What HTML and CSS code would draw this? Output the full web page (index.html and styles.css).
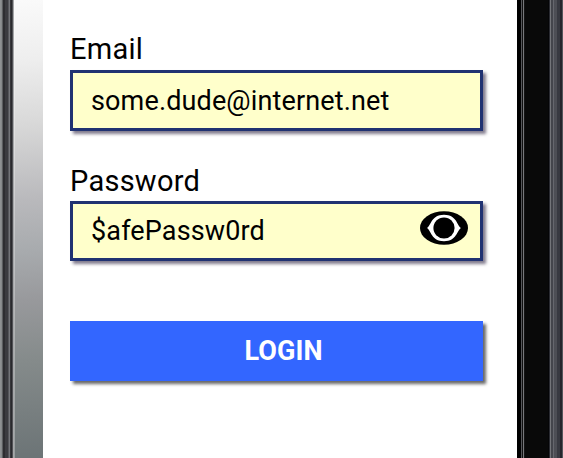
FILE: index.html
```html
<!DOCTYPE html>
<html lang="en">
<head>
<meta charset="utf-8">
<title>Login</title>
<link rel="stylesheet" href="styles.css">
</head>
<body>
<div class="phone">
  <div class="bezel-left"></div>
  <div class="glare"></div>
  <main class="screen">
    <form class="login">
      <div class="field email">
        <label class="label">Email</label>
        <div class="input"><span class="value">some.dude@internet.net</span></div>
      </div>
      <div class="field password">
        <label class="label">Password</label>
        <div class="input">
          <span class="value">$afePassw0rd</span>
          <svg class="eye" viewBox="0 0 48 34" width="48" height="34">
            <ellipse cx="24" cy="17" rx="24" ry="16.7" fill="#000"/>
            <path d="M7 17C11 15 11 3.8 24 3.8S37 15 41 17C37 19 37 30.2 24 30.2S11 19 7 17Z" fill="#fff"/>
            <circle cx="24" cy="17" r="10.6" fill="#000"/>
          </svg>
        </div>
      </div>
      <button class="submit" type="button">LOGIN</button>
    </form>
  </main>
  <div class="bezel-right"></div>
</div>
</body>
</html>
```
FILE: styles.css
```css
* { box-sizing: border-box; }
body { margin: 0; background: #fff; overflow: hidden; font-family: Roboto, sans-serif; color: #000; }
.phone { display: flex; width: 563px; height: 458px; }
.bezel-left {
  width: 14px;
  background: linear-gradient(90deg, #8e9193 0 1px, #85888a 1px 2px, #5b5d60 2px 3px, #2d2d31 3px 5px, #3b3b40 5px 8px, #55565b 8px 9px, #737479 9px 10px, #36363a 10px 11px, #29292d 11px 12px, #505155 12px 13px, #a5a6a8 13px 14px);
}
.glare { width: 29px; background: linear-gradient(176deg, #fafafa 0, #eeeeee 60px, #d8d8d8 125px, #b9b9bc 200px, #a8abae 250px, #98999c 300px, #858b8b 360px, #6c7476 458px); border-left: 1px solid rgba(255, 255, 255, .3); }
.screen { width: 474px; padding: 34.5px 34px 0 27px; background: #fff; }
.login { display: flex; flex-direction: column; }
.field { display: flex; flex-direction: column; }
.email { height: 96.5px; }
.password { margin-top: 36px; }
.label { height: 35.5px; font-size: 29px; line-height: 28px; letter-spacing: .25px; }
.password .label { height: 34px; }
.input {
  display: flex; align-items: center; justify-content: space-between;
  height: 61px; padding: 0 12px 0 18px;
  border: 3px solid #203272; background: #ffffcb;
  box-shadow: 3px 3px 3px rgba(45, 35, 65, .6);
}
.password .input { height: 60px; }
.value { font-size: 27px; line-height: 30px; letter-spacing: .14px; }
.eye { flex: none; margin-top: -6px; }
.submit {
  height: 60px; margin-top: 60px; padding: 0 0 0 14px; border: 0;
  background: #3366ff; color: #fff; font: 700 27px/60px Roboto, sans-serif; letter-spacing: .1px;
  box-shadow: 3px 3px 3px rgba(0, 0, 0, .6);
}
.bezel-right {
  width: 46px;
  background: linear-gradient(90deg, #000 0 4px, #55565a 4px 5px, #111 5px 6px, #77787c 6px 7px, #151515 7px 8px, #090909 8px 31px, #050507 31px 32px, #292a30 32px 33px, #74757a 33px 34px, #44454c 34px 36px, #66676e 36px 37px, #4d4e55 37px 40px, #383941 40px 43px, #26262d 43px 45px, #55565c 45px 46px);
}
```
